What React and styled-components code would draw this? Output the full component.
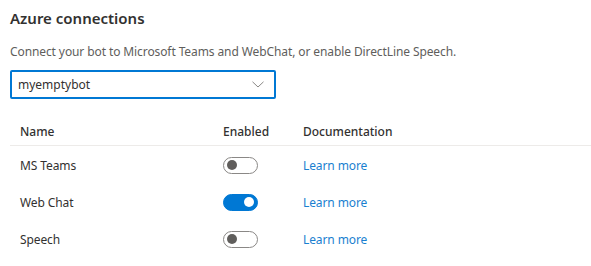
import styled, { createGlobalStyle } from "styled-components";

const Global = createGlobalStyle`
  body {
    margin: 0;
    background: #ffffff;
    font-family: "Segoe UI", "Noto Sans", sans-serif;
    color: #323130;
  }
`

const rows = [
	{ name: "MS Teams", enabled: false },
	{ name: "Web Chat", enabled: true },
	{ name: "Speech", enabled: false },
]

export default function App() {
	return (
		<>
			<Global />
			<Page>
				<Title>Azure connections</Title>
				<Description>
					Connect your bot to Microsoft Teams and WebChat, or enable DirectLine Speech.
				</Description>
				<Dropdown>
					<span>myemptybot</span>
					<svg width="12" height="7" viewBox="0 0 12 7">
						<path d="M0.5 0.8 L6 6 L11.5 0.8" fill="none" stroke="#8a8886" strokeWidth="1" />
					</svg>
				</Dropdown>
				<Table>
					<HeaderRow>
						<Cell>Name</Cell>
						<Cell>Enabled</Cell>
						<Cell>Documentation</Cell>
					</HeaderRow>
					{rows.map(r => (
						<Row key={r.name}>
							<Cell>{r.name}</Cell>
							<Cell>
								<Toggle on={r.enabled}><Thumb on={r.enabled} /></Toggle>
							</Cell>
							<Cell><Link href="#">Learn more</Link></Cell>
						</Row>
					))}
				</Table>
			</Page>
		</>
	)
}

const Page = styled.div`
	padding: 6px 0 0 10px;
`

const Title = styled.h2`
	margin: 0;
	font-size: 15px;
	font-weight: 600;
	line-height: 24px;
	color: #323130;
`

const Description = styled.p`
	margin: 12px 0 0;
	font-size: 12px;
	letter-spacing: -0.1px;
	line-height: 20px;
	color: #605e5c;
`

const Dropdown = styled.div`
	box-sizing: border-box;
	margin-top: 8px;
	width: 266px;
	height: 29px;
	border: 2px solid #0078d4;
	border-radius: 2px;
	display: flex;
	align-items: center;
	justify-content: space-between;
	padding: 0 10px 0 6px;
	font-size: 12px;
	color: #323130;
`

const Table = styled.div`
	margin-top: 18px;
`

const HeaderRow = styled.div`
	display: grid;
	grid-template-columns: 203px 80px 1fr;
	height: 28px;
	align-items: center;
	padding-left: 10px;
	border-bottom: 1px solid #edebe9;
	font-size: 12px;
	font-weight: 500;
	color: #323130;
`

const Row = styled.div`
	box-sizing: border-box;
	display: grid;
	grid-template-columns: 203px 80px 1fr;
	height: 37px;
	align-items: center;
	padding: 1px 0 0 10px;
	font-size: 12px;
	letter-spacing: -0.1px;
	color: #323130;
`

const Cell = styled.div`
	display: flex;
	align-items: center;
`

const Toggle = styled.div`
	box-sizing: border-box;
	width: 35px;
	height: 17px;
	border-radius: 9px;
	border: 1px solid ${p => p.on ? "#0078d4" : "#8a8886"};
	background: ${p => p.on ? "#0078d4" : "#ffffff"};
	display: flex;
	align-items: center;
	justify-content: ${p => p.on ? "flex-end" : "flex-start"};
	padding: 0 3px;
`

const Thumb = styled.div`
	width: 10px;
	height: 10px;
	border-radius: 50%;
	background: ${p => p.on ? "#ffffff" : "#605e5c"};
`

const Link = styled.a`
	color: #1a7fd0;
	text-decoration: none;
	font-size: 12px;
`
